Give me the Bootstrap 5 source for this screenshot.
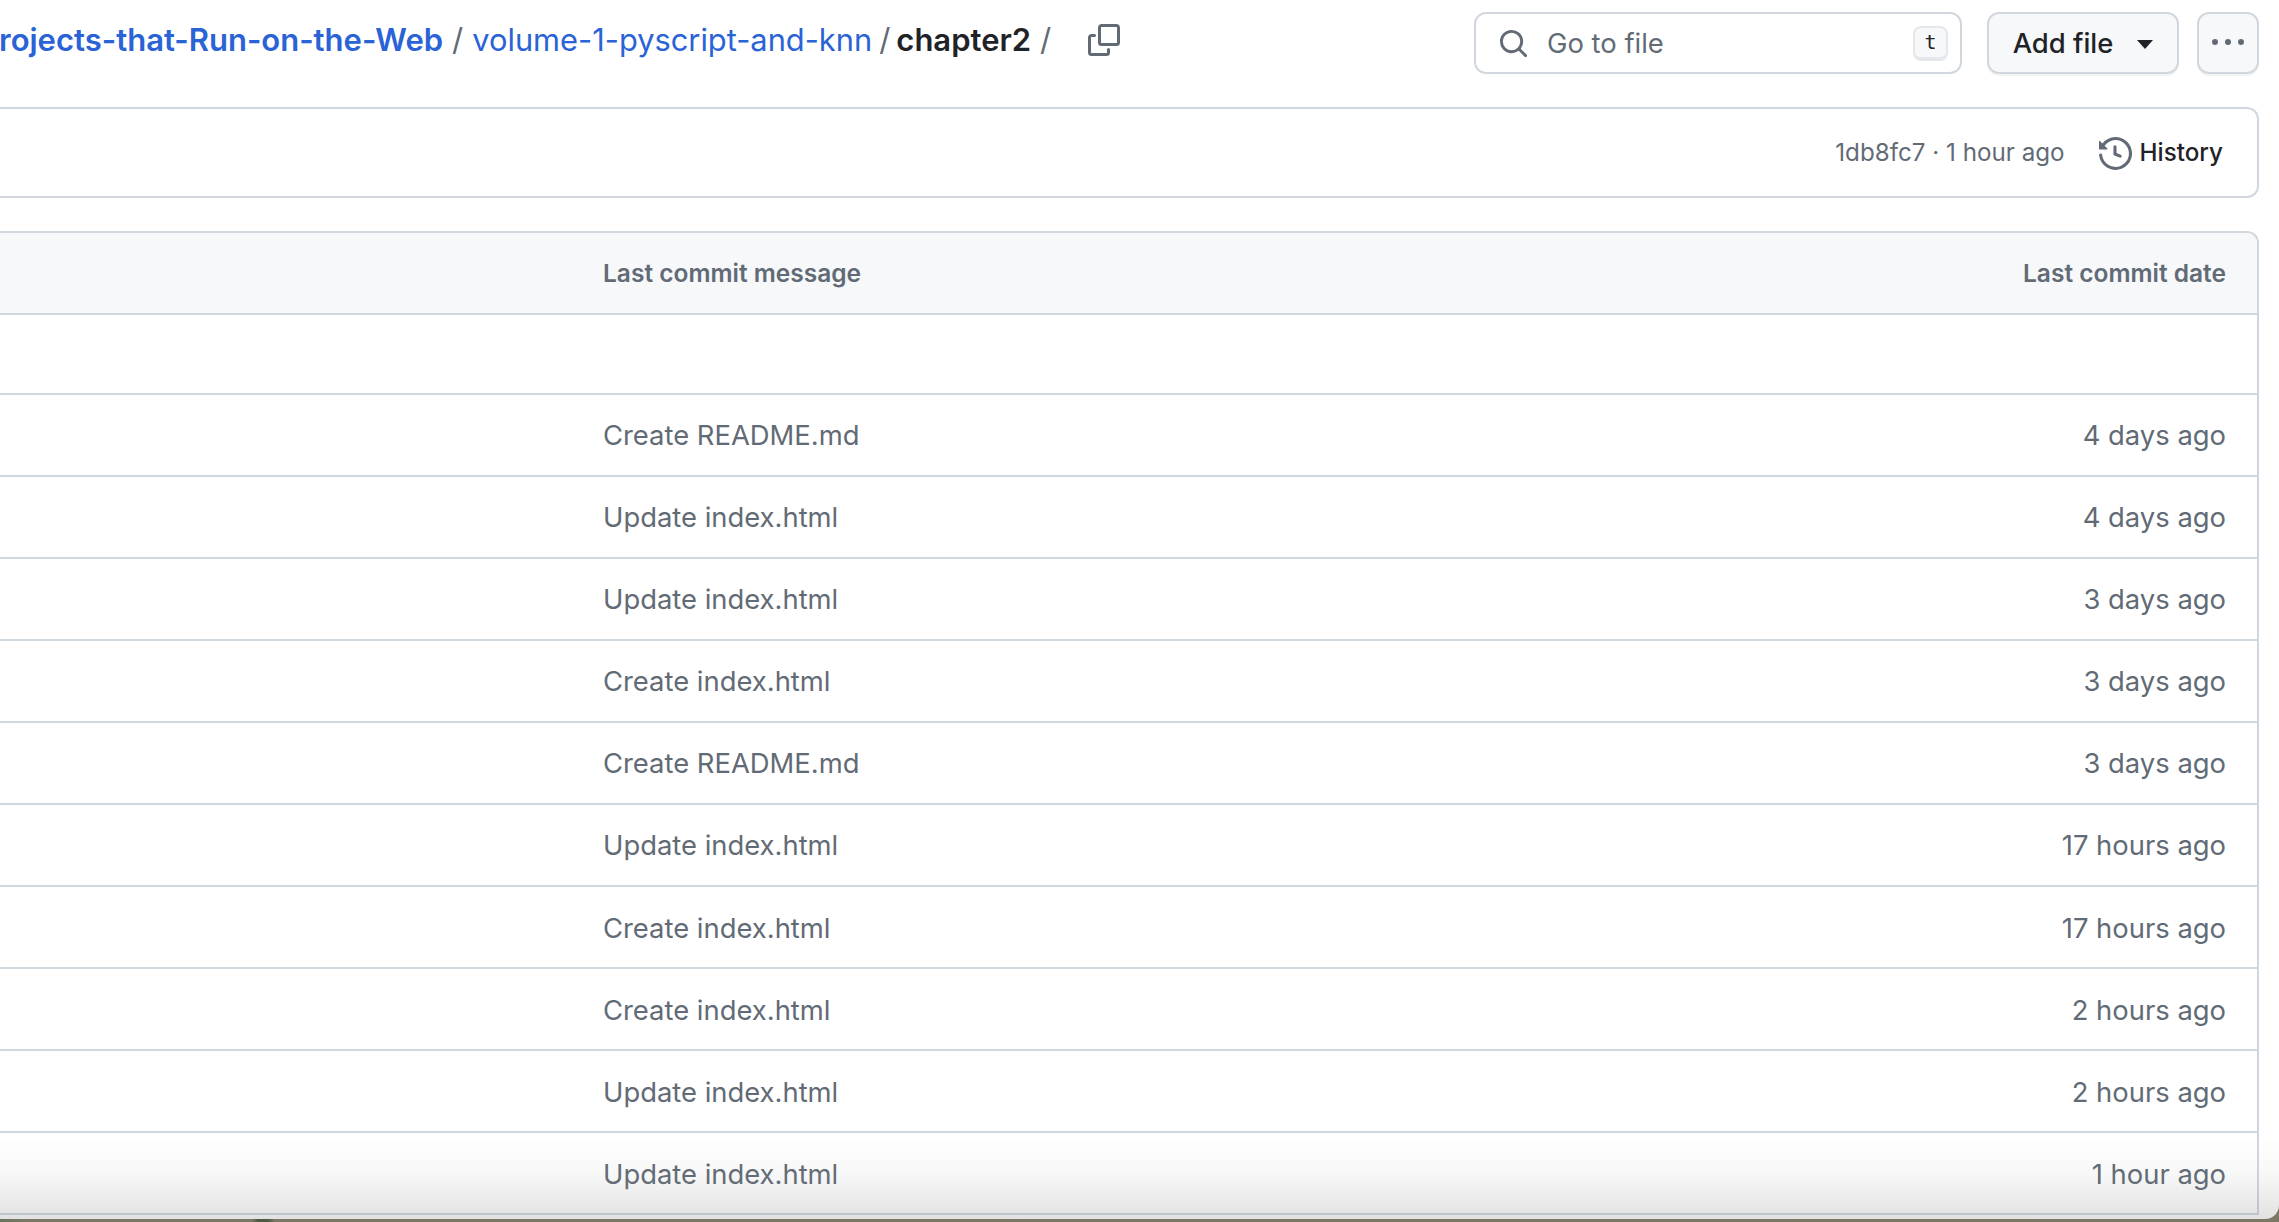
<!doctype html>
<html lang="en">
<head>
<meta charset="utf-8">
<title>chapter2</title>
<link rel="stylesheet" href="https://cdn.jsdelivr.net/npm/bootstrap@5.3.0/dist/css/bootstrap.min.css">
<style>
html,body{height:100%;}
body{background:linear-gradient(to right,#66755f 0,#7d7766 30px,#7d7766 252px,#4f5a45 258px,#4f5a45 268px,#7d7766 275px);overflow:hidden;font-family:Inter,"Liberation Sans",sans-serif;color:#1f2328;}
.win{position:relative;height:1219px;background:#fff;overflow:hidden;border-radius:0 0 14px 0;padding:12px 20px 0 0;}
.topbar{height:62px;}
.crumbs{font-size:31px;line-height:40px;white-space:nowrap;margin-top:-6px;}
.crumbs a{color:#2a63d6;text-decoration:none;}
.crumbs .sep{color:#626b75;margin:0 9px;font-weight:400;}
.crumbs .sep.tight{margin:0 6px 0 7px;}
.crumbs .here{font-weight:600;}
.crumbs .first{font-weight:600;margin-left:-1px;}
.crumbs .second{font-size:30.8px;}
.copyico{width:32px;height:32px;margin-left:28px;fill:#626b75;}
.searchbox{width:488px;height:62px;border:2px solid #d0d7de;border-radius:12px;padding:0 12px 0 22px;color:#626b75;font-size:27.4px;margin-right:25px;}
.searchbox svg{width:31px;height:31px;fill:#626b75;margin-right:18px;}
.searchbox .hinttext{padding-top:2px;}
.keyhint{margin-left:auto;width:35px;height:35px;border:2px solid #e4e8ec;border-bottom-width:4px;border-radius:8px;background:#f6f8fa;font:20px/29px "DejaVu Sans Mono",monospace;text-align:center;color:#1f2328;}
.gbtn{height:62px;border:2px solid #d0d7de;border-radius:12px;background:#f6f8fa;color:#1f2328;box-shadow:0 2px 0 rgba(31,35,40,.05);font-size:27.4px;font-weight:500;padding:0;}
.addbtn{width:192px;margin-right:18px;padding-top:2px;}
.morebtn{width:62px;}
.morebtn svg{width:32px;height:32px;fill:#626b75;}
.caretdn{width:0;height:0;border-left:8px solid transparent;border-right:8px solid transparent;border-top:9px solid #1f2328;margin-left:24px;}
.commitbar{height:91px;margin:33px 0 33px -20px;border:2px solid #d0d7de;border-left:0;border-radius:0 12px 12px 0;padding-right:34px;padding-top:2px;font-size:24.2px;color:#626b75;}
.histlink{color:#1f2328;font-weight:500;margin-left:34px;gap:8px;}
.histlink svg{width:33px;height:33px;fill:#626b75;}
.filebox{margin-left:-20px;border:2px solid #d0d7de;border-left:0;border-bottom:0;border-radius:0 12px 0 0;overflow:hidden;}
.ftable{width:100%;margin:0;table-layout:fixed;}
.ftable th,.ftable td{border-bottom:2px solid #d0d7de;padding:0;vertical-align:middle;background:transparent;color:#626b75;}
.ftable thead tr{height:81px;background:#f6f8fa;}
.ftable th{font-size:24.5px;font-weight:600;}
.ftable tbody tr{height:82.1px;}
.ftable tbody tr.blankrow{height:79.5px;}
.ftable td{font-size:27.4px;padding-top:2px;}
.col-blank{width:623px;}
.col-dt{width:500px;text-align:right;padding-right:31px!important;}
.shade{position:absolute;left:0;right:0;bottom:0;height:85px;pointer-events:none;background:linear-gradient(to bottom,rgba(120,122,126,0),rgba(120,122,126,.05) 45%,rgba(120,122,126,.22));}
</style>
</head>
<body>
<div class="win">
  <div class="topbar d-flex align-items-center">
    <nav class="crumbs flex-grow-1 d-flex align-items-center">
      <a class="first" href="#">rojects-that-Run-on-the-Web</a><span class="sep">/</span><a class="second" href="#">volume-1-pyscript-and-knn</a><span class="sep tight">/</span><span class="here">chapter2</span><span class="sep">/</span>
      <svg class="copyico" viewBox="0 0 16 16"><path d="M0 6.75C0 5.784.784 5 1.75 5h1.5a.75.75 0 0 1 0 1.5h-1.5a.25.25 0 0 0-.25.25v7.5c0 .138.112.25.25.25h7.5a.25.25 0 0 0 .25-.25v-1.5a.75.75 0 0 1 1.5 0v1.5A1.75 1.75 0 0 1 9.25 16h-7.5A1.75 1.75 0 0 1 0 14.25Z"/><path d="M5 1.75C5 .784 5.784 0 6.75 0h7.5C15.216 0 16 .784 16 1.75v7.5A1.75 1.75 0 0 1 14.25 11h-7.5A1.75 1.75 0 0 1 5 9.25Zm1.75-.25a.25.25 0 0 0-.25.25v7.5c0 .138.112.25.25.25h7.5a.25.25 0 0 0 .25-.25v-7.5a.25.25 0 0 0-.25-.25Z"/></svg>
    </nav>
    <div class="searchbox d-flex align-items-center">
      <svg viewBox="0 0 16 16"><path d="M10.68 11.74a6 6 0 0 1-7.922-8.982 6 6 0 0 1 8.982 7.922l3.04 3.04a.749.749 0 0 1-.326 1.275.749.749 0 0 1-.734-.215ZM11.5 7a4.499 4.499 0 1 0-8.997 0A4.499 4.499 0 0 0 11.5 7Z"/></svg>
      <span class="hinttext">Go to file</span>
      <span class="keyhint">t</span>
    </div>
    <button type="button" class="btn gbtn addbtn d-flex align-items-center justify-content-center">Add file<span class="caretdn"></span></button>
    <button type="button" class="btn gbtn morebtn d-flex align-items-center justify-content-center" aria-label="More"><svg viewBox="0 0 16 16"><path d="M8 9a1.5 1.5 0 1 0 0-3 1.5 1.5 0 0 0 0 3ZM1.5 9a1.5 1.5 0 1 0 0-3 1.5 1.5 0 0 0 0 3Zm13 0a1.5 1.5 0 1 0 0-3 1.5 1.5 0 0 0 0 3Z"/></svg></button>
  </div>
  <div class="commitbar d-flex align-items-center justify-content-end">
    <span>1db8fc7 · 1 hour ago</span>
    <span class="histlink d-flex align-items-center"><svg viewBox="0 0 16 16"><path d="m.427 1.927 1.215 1.215a8.002 8.002 0 1 1-1.6 5.685.75.75 0 1 1 1.493-.154 6.5 6.5 0 1 0 1.18-4.458l1.358 1.358A.25.25 0 0 1 3.896 6H.25A.25.25 0 0 1 0 5.75V2.104a.25.25 0 0 1 .427-.177ZM7.75 4a.75.75 0 0 1 .75.75v2.992l2.028.812a.75.75 0 0 1-.557 1.392l-2.5-1A.751.751 0 0 1 7 8.25v-3.5A.75.75 0 0 1 7.75 4Z"/></svg>History</span>
  </div>
  <div class="filebox">
    <table class="table ftable">
      <thead>
        <tr><th class="col-blank"></th><th>Last commit message</th><th class="col-dt">Last commit date</th></tr>
      </thead>
      <tbody>
        <tr class="blankrow"><td></td><td></td><td class="col-dt"></td></tr>
        <tr><td></td><td>Create README.md</td><td class="col-dt">4 days ago</td></tr>
        <tr><td></td><td>Update index.html</td><td class="col-dt">4 days ago</td></tr>
        <tr><td></td><td>Update index.html</td><td class="col-dt">3 days ago</td></tr>
        <tr><td></td><td>Create index.html</td><td class="col-dt">3 days ago</td></tr>
        <tr><td></td><td>Create README.md</td><td class="col-dt">3 days ago</td></tr>
        <tr><td></td><td>Update index.html</td><td class="col-dt">17 hours ago</td></tr>
        <tr><td></td><td>Create index.html</td><td class="col-dt">17 hours ago</td></tr>
        <tr><td></td><td>Create index.html</td><td class="col-dt">2 hours ago</td></tr>
        <tr><td></td><td>Update index.html</td><td class="col-dt">2 hours ago</td></tr>
        <tr><td></td><td>Update index.html</td><td class="col-dt">1 hour ago</td></tr>
      </tbody>
    </table>
  </div>
  <div class="shade"></div>
</div>
<script src="https://cdn.jsdelivr.net/npm/bootstrap@5.3.0/dist/js/bootstrap.bundle.min.js"></script>
</body>
</html>
